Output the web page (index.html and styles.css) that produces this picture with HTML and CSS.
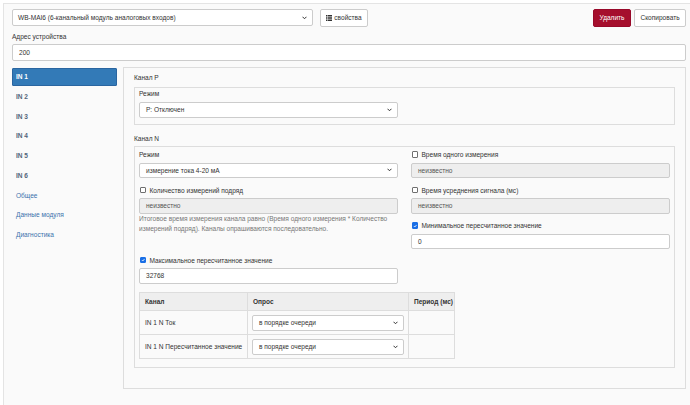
FILE: index.html
```html
<!DOCTYPE html>
<html lang="ru">
<head>
<meta charset="utf-8">
<link rel="stylesheet" href="styles.css">
</head>
<body>
<div class="page">
  <div class="toolbar">
    <div class="select device"><span>WB-MAI6 (6-канальный модуль аналоговых входов)</span><svg class="chev" width="5" height="4" viewBox="0 0 10 7"><path d="M1 1l4 4 4-4" fill="none" stroke="#333" stroke-width="2"/></svg></div>
    <button class="btn props"><svg width="6" height="6" viewBox="0 0 12 12" fill="#333"><rect x="0" y="0" width="3" height="3"/><rect x="4" y="0" width="8" height="3"/><rect x="0" y="4.5" width="3" height="3"/><rect x="4" y="4.5" width="8" height="3"/><rect x="0" y="9" width="3" height="3"/><rect x="4" y="9" width="8" height="3"/></svg>свойства</button>
    <button class="btn danger">Удалить</button>
    <button class="btn copy">Скопировать</button>
  </div>
  <div class="addr-lbl">Адрес устройства</div>
  <div class="input addr">200</div>
  <div class="main">
    <nav class="nav">
      <a class="item in active">IN 1</a>
      <a class="item in">IN 2</a>
      <a class="item in">IN 3</a>
      <a class="item in">IN 4</a>
      <a class="item in">IN 5</a>
      <a class="item in">IN 6</a>
      <a class="item">Общее</a>
      <a class="item">Данные модуля</a>
      <a class="item">Диагностика</a>
    </nav>
    <section class="box">
      <div class="sec-title">Канал P</div>
      <div class="inner inner-p">
        <div class="grid">
          <div class="group">
            <div class="lbl">Режим</div>
            <div class="select ctl"><span>P: Отключен</span><svg class="chev" width="5" height="4" viewBox="0 0 10 7"><path d="M1 1l4 4 4-4" fill="none" stroke="#333" stroke-width="2"/></svg></div>
          </div>
        </div>
      </div>
      <div class="sec-title title-n">Канал N</div>
      <div class="inner inner-n">
        <div class="grid">
          <div class="col">
            <div class="group">
              <div class="lbl">Режим</div>
              <div class="select ctl"><span>измерение тока 4-20 мА</span><svg class="chev" width="5" height="4" viewBox="0 0 10 7"><path d="M1 1l4 4 4-4" fill="none" stroke="#333" stroke-width="2"/></svg></div>
            </div>
            <div class="group help-group">
              <div class="lbl check"><span class="cb"></span>Количество измерений подряд</div>
              <div class="input ctl disabled">неизвестно</div>
              <div class="help">Итоговое время измерения канала равно (Время одного измерения * Количество<br>измерений подряд). Каналы опрашиваются последовательно.</div>
            </div>
            <div class="group">
              <div class="lbl check"><span class="cb on"><svg viewBox="0 0 10 10" width="6" height="6"><path d="M2 5.2l2 2 4-4.6" stroke="#fff" stroke-width="1.8" fill="none"/></svg></span>Максимальное пересчитанное значение</div>
              <div class="input ctl">32768</div>
            </div>
          </div>
          <div class="col">
            <div class="group">
              <div class="lbl check"><span class="cb"></span>Время одного измерения</div>
              <div class="input ctl disabled">неизвестно</div>
            </div>
            <div class="group">
              <div class="lbl check"><span class="cb"></span>Время усреднения сигнала (мс)</div>
              <div class="input ctl disabled">неизвестно</div>
            </div>
            <div class="group">
              <div class="lbl check"><span class="cb on"><svg viewBox="0 0 10 10" width="6" height="6"><path d="M2 5.2l2 2 4-4.6" stroke="#fff" stroke-width="1.8" fill="none"/></svg></span>Минимальное пересчитанное значение</div>
              <div class="input ctl">0</div>
            </div>
          </div>
        </div>
        <table class="tbl">
          <colgroup><col class="c1"><col class="c2"><col class="c3"></colgroup>
          <thead>
            <tr><th>Канал</th><th>Опрос</th><th>Период (мс)</th></tr>
          </thead>
          <tbody>
            <tr>
              <td>IN 1 N Ток</td>
              <td class="sel-cell"><div class="select ctl tsel"><span>в порядке очереди</span><svg class="chev" width="5" height="4" viewBox="0 0 10 7"><path d="M1 1l4 4 4-4" fill="none" stroke="#333" stroke-width="2"/></svg></div></td>
              <td></td>
            </tr>
            <tr>
              <td>IN 1 N Пересчитанное значение</td>
              <td class="sel-cell"><div class="select ctl tsel"><span>в порядке очереди</span><svg class="chev" width="5" height="4" viewBox="0 0 10 7"><path d="M1 1l4 4 4-4" fill="none" stroke="#333" stroke-width="2"/></svg></div></td>
              <td></td>
            </tr>
          </tbody>
        </table>
      </div>
    </section>
  </div>
</div>
</body>
</html>
```
FILE: styles.css
```css
html, body {
  margin: 0;
  background: #ffffff;
}
body {
  font-family: "Liberation Sans", Arial, sans-serif;
  font-size: 6.55px;
  line-height: 1.4;
  color: #333333;
}
.page {
  margin: 3px 0 0 3px;
  border-top: 1px solid #e4e4e4;
  border-left: 1px solid #e4e4e4;
  background: #fafafa;
  padding: 5px 4px 0 8px;
  height: 402px;
  box-sizing: border-box;
}
.toolbar {
  display: flex;
  align-items: flex-start;
}
.select {
  display: flex;
  align-items: center;
  justify-content: space-between;
  background: #ffffff;
  border: 1px solid #cccccc;
  border-radius: 2px;
  box-sizing: border-box;
  padding: 0 5px 0 6px;
  white-space: nowrap;
}
.chev {
  flex: none;
}
.device {
  width: 301px;
  height: 17px;
  padding-left: 5px;
}
.btn {
  height: 18px;
  box-sizing: border-box;
  border: 1px solid #cccccc;
  background: #ffffff;
  border-radius: 2px;
  font: inherit;
  color: #333333;
  padding: 0;
  display: inline-flex;
  align-items: center;
  justify-content: center;
}
.props {
  margin-left: 7px;
  width: 48px;
  gap: 2px;
}
.danger {
  margin-left: auto;
  width: 38px;
  background: #a50f2d;
  border-color: #98092a;
  color: #ffffff;
}
.copy {
  margin-left: 3px;
  width: 52px;
}
.addr-lbl {
  line-height: 9px;
  margin: 5px 0 3px;
}
.input {
  display: flex;
  align-items: center;
  background: #ffffff;
  border: 1px solid #cccccc;
  border-radius: 2px;
  box-sizing: border-box;
  padding-left: 6px;
  white-space: nowrap;
}
.addr {
  height: 17px;
}
.main {
  display: grid;
  grid-template-columns: 105px 1fr;
  gap: 6px;
  margin-top: 6px;
}
.nav {
  display: flex;
  flex-direction: column;
  gap: 1.75px;
  margin-top: 1px;
}
.item {
  display: block;
  height: 18px;
  line-height: 18px;
  padding-left: 4px;
  box-sizing: border-box;
  color: #3a72ac;
  text-decoration: none;
  border-radius: 1px;
}
.item.in {
  color: #52657b;
  font-weight: bold;
}
.item.active {
  background: #337ab7;
  border: 1px solid #2a65a0;
  color: #ffffff;
  line-height: 16px;
  padding-left: 3px;
}
.box {
  border: 1px solid #dddddd;
  padding: 5px 10px 20px;
  background: #fafafa;
}
.sec-title {
  line-height: 9px;
  margin-bottom: 5px;
}
.title-n {
  margin-top: 9.5px;
  margin-bottom: 2.5px;
}
.inner {
  border: 1px solid #dddddd;
  padding: 1px 4px 8px 4px;
}
.inner-p {
  padding-bottom: 6px;
}
.inner-n {
  padding-top: 3.5px;
}
.grid {
  display: grid;
  grid-template-columns: 1fr 1fr;
  column-gap: 13px;
  align-items: start;
}
.group {
  margin-bottom: 7.5px;
}
.inner-p .group {
  margin-bottom: 0;
}
.lbl {
  line-height: 9px;
  margin-bottom: 3.5px;
  white-space: nowrap;
}
.inner-p .lbl {
  margin-bottom: 4px;
}
.ctl {
  height: 15.5px;
}
.disabled {
  background: #eeeeee;
  color: #555555;
}
.check {
  display: flex;
  align-items: center;
  gap: 3.5px;
  padding-left: 0.5px;
}
.cb {
  width: 6.5px;
  height: 6.5px;
  box-sizing: border-box;
  border: 1px solid #6f6f6f;
  border-radius: 1px;
  background: #ffffff;
  display: inline-flex;
  align-items: center;
  justify-content: center;
  flex: none;
}
.cb.on {
  background: #1a6fe6;
  border-color: #1a6fe6;
}
.cb svg {
  width: 6px;
  height: 6px;
}
.help {
  color: #777777;
  line-height: 10px;
  margin-top: 0.5px;
  white-space: nowrap;
}
.help-group {
  margin-bottom: 21.5px;
}
.tbl {
  border-collapse: collapse;
  width: 315px;
  table-layout: fixed;
  margin-top: 1px;
}
.c1 { width: 108px; }
.c2 { width: 161px; }
.c3 { width: 46px; }
.tbl th,
.tbl td {
  border: 1px solid #dddddd;
  text-align: left;
  padding: 0 5px;
  white-space: nowrap;
}
.tbl th {
  height: 18px;
  box-sizing: border-box;
  background: #eeeeee;
  font-weight: bold;
}
.tbl td {
  height: 24px;
  box-sizing: border-box;
}
.tbl td.sel-cell {
  padding: 0 4px;
}
.tsel {
  height: 16px;
}
```
